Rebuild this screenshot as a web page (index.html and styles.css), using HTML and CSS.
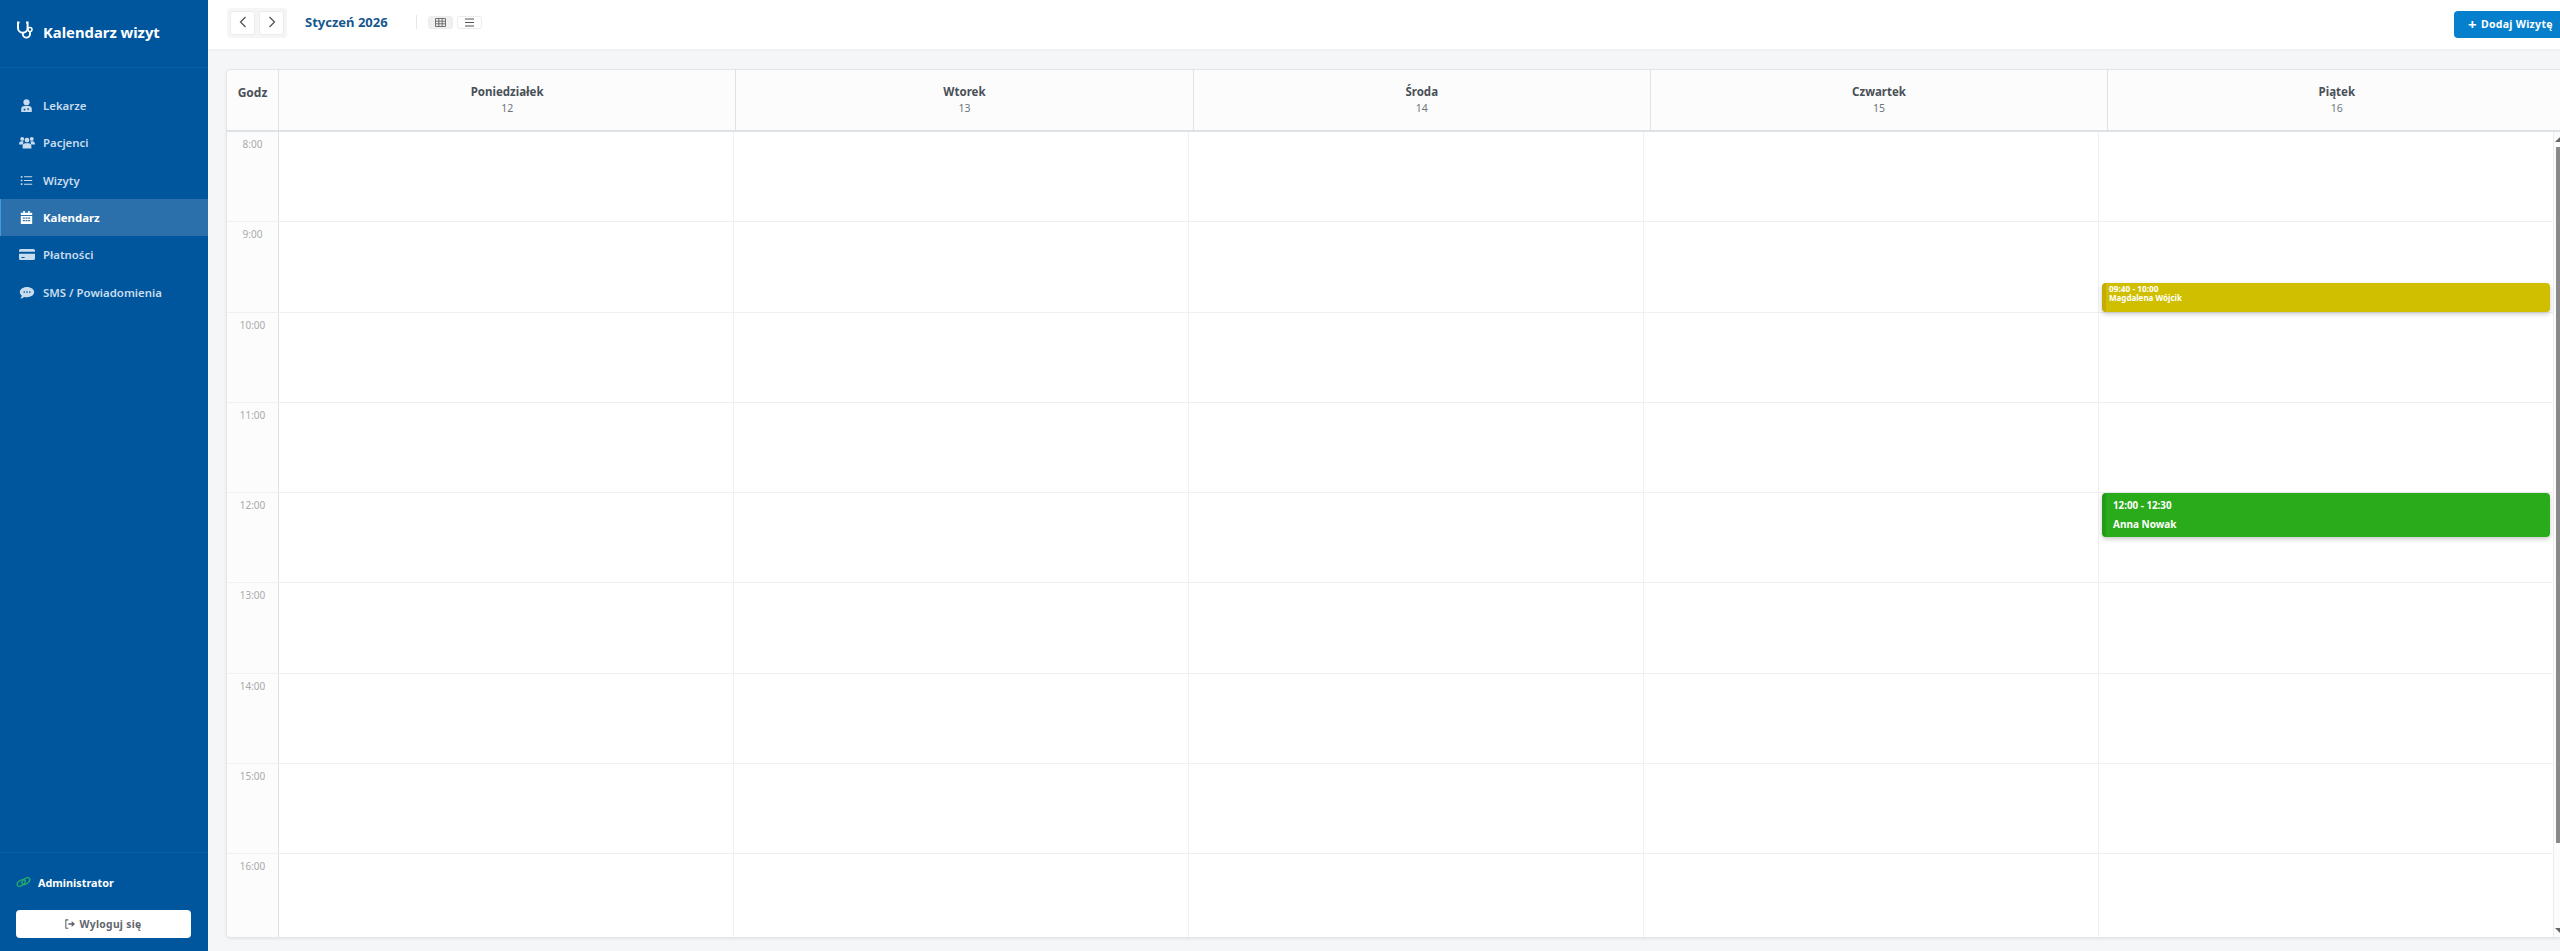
FILE: index.html
```html
<!DOCTYPE html>
<html lang="pl">
<head>
<meta charset="utf-8">
<title>Kalendarz wizyt</title>
<link rel="stylesheet" href="styles.css">
</head>
<body>
<div class="app">
  <aside class="sidebar">
    <div class="brand">
      <svg class="brand-icon" viewBox="0 0 18 18"><path d="M3.5 1.500H2V7a4.800 4.800 0 0 0 9.600 0V1.500H10" fill="none" stroke="currentColor" stroke-width="2"/><path d="M6.800 12v1a3.600 3.600 0 0 0 7.200 0v-2.500" fill="none" stroke="currentColor" stroke-width="1.900"/><circle cx="14" cy="8.500" r="2" fill="none" stroke="currentColor" stroke-width="1.500"/></svg>
      <span>Kalendarz wizyt</span>
    </div>
    <nav class="nav">
      <a class="nav-item"><svg class="nav-icon" viewBox="0 0 16 16"><circle cx="8" cy="4" r="3.800" fill="currentColor"/><path d="M1.500 16v-3.500a4 4 0 0 1 4-4h5a4 4 0 0 1 4 4V16zM4.500 12v2h2v-2zM10 11.500a1 1 0 1 0 .01 0z" fill="currentColor" fill-rule="evenodd"/></svg><span>Lekarze</span></a>
      <a class="nav-item"><svg class="nav-icon wide" viewBox="0 0 20 16"><circle cx="4" cy="3.500" r="2.400" fill="currentColor"/><circle cx="16" cy="3.500" r="2.400" fill="currentColor"/><circle cx="10" cy="5" r="3" fill="currentColor"/><path d="M0 10c0-2 1.500-3.500 3-3.500h2.500L5 10.500H0zM20 10c0-2-1.500-3.500-3-3.500h-2.500l.5 4h5zM4.500 15.500V13c0-2.500 1.500-4 3.500-4h4c2 0 3.500 1.500 3.500 4v2.500z" fill="currentColor"/></svg><span>Pacjenci</span></a>
      <a class="nav-item"><svg class="nav-icon" viewBox="0 0 16 16"><path d="M5 3.500h10M5 8h10M5 12.500h10" fill="none" stroke="currentColor" stroke-width="1.300"/><path d="M1 2.500h2v2H1zM1 7h2v2H1zM1 11.500h2v2H1z" fill="currentColor"/></svg><span>Wizyty</span></a>
      <a class="nav-item active"><svg class="nav-icon" viewBox="0 0 16 16"><path d="M4 0h2v2h4V0h2v2h3v3H1V2h3zM1 6h14v10H1zM3.500 8v1.500H6V8zM6.800 8v1.500h2.400V8zM10 8v1.500h2.500V8zM3.500 11v1.500H6V11zM6.800 11v1.500h2.400V11zM10 11v1.500h2.500V11z" fill="currentColor" fill-rule="evenodd"/></svg><span>Kalendarz</span></a>
      <a class="nav-item"><svg class="nav-icon wide" viewBox="0 0 20 16"><path d="M2 1h16a2 2 0 0 1 2 2v1.500H0V3a2 2 0 0 1 2-2zM0 7h20v6a2 2 0 0 1-2 2H2a2 2 0 0 1-2-2zM3 11v1.500h4V11z" fill="currentColor" fill-rule="evenodd"/></svg><span>Płatności</span></a>
      <a class="nav-item"><svg class="nav-icon wide" viewBox="0 0 20 16"><path d="M10 1c5 0 9 3 9 6.500S15 14 10 14c-1.200 0-2.300-.2-3.300-.5C5.500 14.500 3.500 15.500 1.500 15.500c1-1 1.800-2.300 2-3.500C2 10.800 1 9.200 1 7.500 1 4 5 1 10 1z" fill="currentColor"/><circle cx="6.500" cy="7.500" r="1" fill="#00569d"/><circle cx="10" cy="7.500" r="1" fill="#00569d"/><circle cx="13.500" cy="7.500" r="1" fill="#00569d"/></svg><span>SMS / Powiadomienia</span></a>
    </nav>
    <div class="side-footer">
      <div class="user">
        <svg class="user-icon" viewBox="0 0 16 12"><ellipse cx="5.500" cy="7" rx="4.800" ry="2.800" transform="rotate(-35 5.500 7)" fill="none" stroke="currentColor" stroke-width="1.300"/><ellipse cx="10.500" cy="5" rx="4.800" ry="2.800" transform="rotate(-35 10.500 5)" fill="none" stroke="currentColor" stroke-width="1.300"/></svg>
        <span>Administrator</span>
      </div>
      <button class="logout"><svg class="logout-icon" viewBox="0 0 14 12"><path d="M5 1H2v10h3" fill="none" stroke="currentColor" stroke-width="1.300"/><path d="M5 5h4V2.500L13 6 9 9.500V7H5z" fill="currentColor"/></svg>Wyloguj się</button>
    </div>
  </aside>
  <main class="main">
    <header class="topbar">
      <div class="nav-group">
        <button class="arrow"><svg viewBox="0 0 10 14"><path d="M7.500 2 2.500 7l5 5" fill="none" stroke="currentColor" stroke-width="1.300"/></svg></button>
        <button class="arrow"><svg viewBox="0 0 10 14"><path d="M2.500 2l5 5-5 5" fill="none" stroke="currentColor" stroke-width="1.300"/></svg></button>
      </div>
      <h1 class="month">Styczeń 2026</h1>
      <div class="divider"></div>
      <button class="view active"><svg viewBox="0 0 11 9"><path d="M.5.500h10v8H.5zM.5 3.200h10M.5 5.800h10M3.800.500v8M7.200.500v8" fill="none" stroke="currentColor" stroke-width=".8"/></svg></button>
      <button class="view"><svg viewBox="0 0 11 9"><path d="M1 1h9M1 4.500h9M1 8h9" fill="none" stroke="currentColor" stroke-width="1"/></svg></button>
      <button class="add"><span class="plus">+</span>Dodaj Wizytę</button>
    </header>
    <section class="calendar">
      <div class="head">
        <div class="head-time">Godz</div>
        <div class="head-day"><b>Poniedziałek</b><small>12</small></div>
        <div class="head-day"><b>Wtorek</b><small>13</small></div>
        <div class="head-day"><b>Środa</b><small>14</small></div>
        <div class="head-day"><b>Czwartek</b><small>15</small></div>
        <div class="head-day"><b>Piątek</b><small>16</small></div>
      </div>
      <div class="body">
        <div class="grid">
          <div class="row"><div class="time">8:00</div><div class="cell"></div><div class="cell"></div><div class="cell"></div><div class="cell"></div><div class="cell"></div></div>
          <div class="row"><div class="time">9:00</div><div class="cell"></div><div class="cell"></div><div class="cell"></div><div class="cell"></div><div class="cell"><div class="event yellow"><div>09:40 - 10:00</div><div class="who">Magdalena Wójcik</div></div></div></div>
          <div class="row"><div class="time">10:00</div><div class="cell"></div><div class="cell"></div><div class="cell"></div><div class="cell"></div><div class="cell"></div></div>
          <div class="row"><div class="time">11:00</div><div class="cell"></div><div class="cell"></div><div class="cell"></div><div class="cell"></div><div class="cell"></div></div>
          <div class="row"><div class="time">12:00</div><div class="cell"></div><div class="cell"></div><div class="cell"></div><div class="cell"></div><div class="cell"><div class="event green"><div>12:00 - 12:30</div><div class="who">Anna Nowak</div></div></div></div>
          <div class="row"><div class="time">13:00</div><div class="cell"></div><div class="cell"></div><div class="cell"></div><div class="cell"></div><div class="cell"></div></div>
          <div class="row"><div class="time">14:00</div><div class="cell"></div><div class="cell"></div><div class="cell"></div><div class="cell"></div><div class="cell"></div></div>
          <div class="row"><div class="time">15:00</div><div class="cell"></div><div class="cell"></div><div class="cell"></div><div class="cell"></div><div class="cell"></div></div>
          <div class="row"><div class="time">16:00</div><div class="cell"></div><div class="cell"></div><div class="cell"></div><div class="cell"></div><div class="cell"></div></div>
        </div>
        <div class="scrollbar"><span class="up"></span><span class="thumb"></span><span class="down"></span></div>
      </div>
    </section>
  </main>
</div>
</body>
</html>
```
FILE: styles.css
```css
* { box-sizing: border-box; }
html, body { margin: 0; height: 100%; overflow: hidden; }
body { font-family: "Noto Sans", "Open Sans", sans-serif; color: #495057; background: #f5f6f7; }
button { font-family: inherit; }
.app { display: flex; height: 951px; }

.sidebar { width: 208px; flex: none; background: #00569d; display: flex; flex-direction: column; color: #c9dcee; }
.brand { height: 68px; flex: none; display: flex; align-items: center; gap: 9px; padding: 0 0 4px 16px; color: #fff; font-size: 14.800px; font-weight: 700; border-bottom: 1px solid #0a5fa3; }
.brand-icon { width: 18px; height: 18px; margin-top: -3px; }
.nav { padding-top: 19px; flex: 1; display: flex; flex-direction: column; }
.nav-item { height: 37.300px; display: flex; align-items: center; padding-left: 20px; gap: 10px; font-size: 11.400px; font-weight: 600; }
.nav-icon { width: 13px; height: 13px; flex: none; }
.nav-icon.wide { width: 16px; height: 13px; margin-left: -1.500px; margin-right: -1.500px; }
.nav-item.active { background: #2b70aa; color: #fff; font-weight: 700; border-left: 1px solid #3d9be0; padding-left: 19px; }
.side-footer { height: 99px; flex: none; border-top: 1px solid #0a5fa3; padding: 19px 16px 0; }
.user { display: flex; align-items: center; gap: 7px; color: #fff; font-size: 10.800px; font-weight: 700; height: 20px; }
.user-icon { width: 15px; height: 12px; color: #27b36a; }
.logout { margin-top: 18px; width: 175px; height: 28px; background: #fff; border: 0; border-radius: 4px; color: #5f666d; font-size: 10.300px; font-weight: 700; letter-spacing: .3px; display: flex; align-items: center; justify-content: center; gap: 4px; padding: 0 2px 0 0; }
.logout-icon { width: 12px; height: 10px; }

.main { flex: 1; min-width: 0; display: flex; flex-direction: column; }
.topbar { height: 50px; flex: none; background: #fff; display: flex; align-items: center; padding: 0 0 5px 19px; border-bottom: 1px solid #eef0f1; box-shadow: 0 1px 2px rgba(0,0,0,.03); }
.nav-group { display: flex; gap: 4px; background: #f5f5f5; padding: 3px; border-radius: 4px; margin-right: 18px; margin-top: 1px; }
.arrow { width: 25px; height: 24px; padding: 0; background: #fff; border: 1px solid #ececec; border-radius: 3px; color: #555; display: flex; align-items: center; justify-content: center; }
.arrow svg { width: 10px; height: 14px; margin-top: -2px; }
.month { margin: 0; font-size: 13px; font-weight: 700; color: #16578e; width: 111px; }
.divider { width: 1px; height: 14px; background: #e5e7e9; margin-right: 11px; }
.view { width: 25px; height: 13px; padding: 0; margin-right: 4px; background: #fff; border: 1px solid #ececec; border-radius: 3px; color: #555; display: flex; align-items: center; justify-content: center; }
.view.active { background: #f0f0f0; }
.view svg { width: 11px; height: 9px; }
.add { margin-left: auto; width: 106px; height: 27px; margin-top: 4px; background: #0680cd; border: 0; border-radius: 4px 0 0 4px; color: #fff; font-size: 10.500px; font-weight: 700; letter-spacing: .3px; padding: 0 0 0 14px; display: flex; align-items: center; gap: 4px; white-space: nowrap; }
.plus { font-size: 15px; line-height: 1; }

.calendar { flex: 1; min-height: 0; margin: 19px 0 13px 18px; background: #fff; border: 1px solid #e4e6e8; border-right: 0; border-radius: 5px 0 0 5px; box-shadow: 0 1px 3px rgba(0,0,0,.08); display: flex; flex-direction: column; overflow: hidden; }
.head { display: flex; height: 62px; flex: none; background: #fcfcfc; border-bottom: 2px solid #dfe2e5; }
.head-time { width: 52px; flex: none; border-right: 1px solid #dee2e6; text-align: center; padding-top: 14px; font-size: 12px; font-weight: 700; color: #495057; }
.head-day { width: 457.300px; flex: none; border-right: 1px solid #dee2e6; display: flex; flex-direction: column; align-items: center; padding-top: 14px; font-size: 11.500px; }
.head-day:last-child { border-right: 0; }
.head-day b { font-weight: 700; }
.head-day small { font-size: 10.500px; color: #6c757d; margin-top: 2px; }
.body { flex: 1; min-height: 0; display: flex; }
.grid { flex: 1; min-width: 0; display: flex; flex-direction: column; overflow: hidden; }
.row { height: 90.300px; flex: none; display: flex; border-bottom: 1px solid #eef0f2; }
.row:last-child { border-bottom: 0; }
.time { width: 52px; flex: none; background: #fcfcfc; border-right: 1px solid #dee2e6; text-align: center; font-size: 10px; color: #aaa; padding-top: 5px; }
.cell { flex: 1; min-width: 0; border-right: 1px solid #eef0f2; position: relative; }
.cell:last-child { border-right: 0; }
.event { position: absolute; left: 3px; right: 3px; border-radius: 4px; color: #fff; font-weight: 700; box-shadow: 0 2px 5px rgba(0,0,0,.22); }
.yellow { top: 61px; height: 29px; background: #cfbf00; border-left: 4px solid #c4ad00; padding: 1px 0 0 3px; font-size: 8.300px; line-height: 9px; }
.yellow .who { font-size: 8px; }
.green { top: 0; height: 44px; background: #2aab1b; border-left: 4px solid #259a18; padding: 6px 0 0 7px; font-size: 9.800px; line-height: 14px; }
.green .who { font-size: 10px; margin-top: 4px; }
.scrollbar { width: 7px; flex: none; background: #fcfcfc; border-left: 1px solid #ececec; display: flex; flex-direction: column; padding-top: 5px; overflow: hidden; }
.up, .down { width: 0; height: 0; margin-left: 1px; border-left: 5px solid transparent; border-right: 5px solid transparent; flex: none; }
.up { border-bottom: 5px solid #666; }
.thumb { width: 4px; height: 696px; flex: none; margin: 5px 0 0 2px; background: #8a8a8a; }
.down { border-top: 5px solid #666; margin-top: 85px; }
```
